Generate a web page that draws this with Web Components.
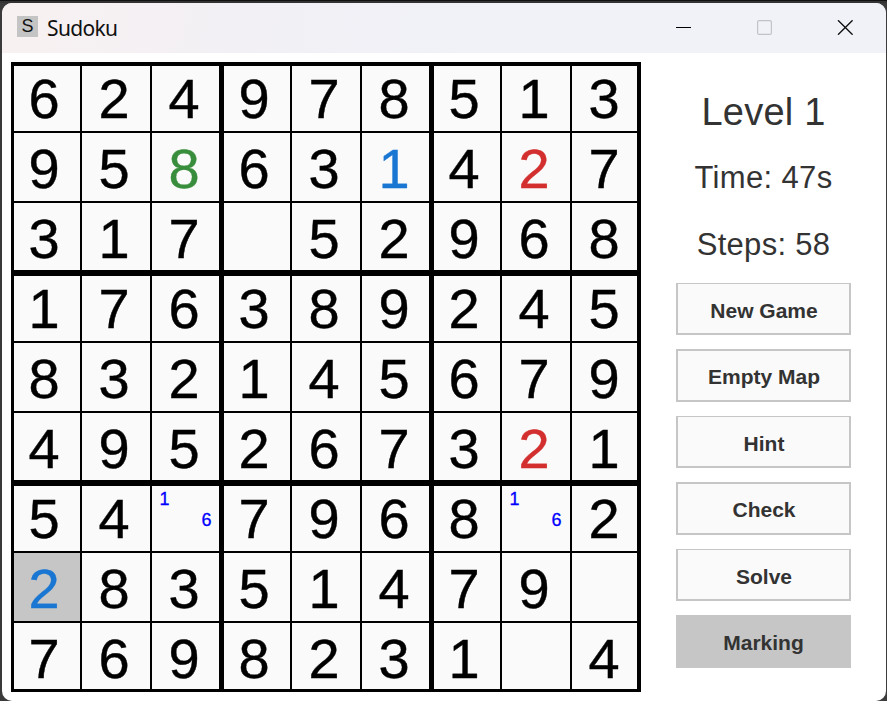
<!DOCTYPE html>
<html lang="en">
<head>
<meta charset="utf-8">
<title>Sudoku</title>
<style>
html,body{margin:0;height:100%;overflow:hidden}
body{font-family:"Liberation Sans",sans-serif;background:linear-gradient(90deg,#3a3a3a 0 25%,#474747 60%,#3c3c3c)}
</style>
</head>
<body>
<app-window>
  <title-bar slot="title">Sudoku</title-bar>
  <sudoku-board selected="63"></sudoku-board>
  <side-panel>
    <stat-line size="38" style="--h:44px;--top:36px;--ls:.2px">Level 1</stat-line>
    <stat-line size="31" style="--h:36px;--top:34px;--ls:.35px">Time: 47s</stat-line>
    <stat-line size="31" style="--h:36px;--top:39px;--ls:.3px">Steps: 58</stat-line>
    <menu-button slot="actions">New Game</menu-button>
    <menu-button slot="actions" tall>Empty Map</menu-button>
    <menu-button slot="actions">Hint</menu-button>
    <menu-button slot="actions" tall>Check</menu-button>
    <menu-button slot="actions">Solve</menu-button>
    <menu-button slot="actions" tall active>Marking</menu-button>
  </side-panel>
</app-window>
<script>
const define = (name, html, setup) => customElements.define(name, class extends HTMLElement {
  connectedCallback() {
    if (this.shadowRoot) return;
    this.attachShadow({mode: 'open'}).innerHTML = html;
    if (setup) setup(this, this.shadowRoot);
  }
});

define('app-window', `<style>
:host{display:block;box-sizing:border-box;width:887px;height:701px;padding:3px 1px 0 2px;background:linear-gradient(#111 0 1px,#333 1px 3px,transparent 3px)}
.frame{height:698px;background:#fff;border-radius:10px;overflow:hidden}
.body{display:flex;padding:9px 0 0 9px}
</style><div class="frame"><slot name="title"></slot><div class="body"><slot></slot></div></div>`);

define('title-bar', `<style>
:host{display:flex;align-items:center;height:50px;background:linear-gradient(100deg,#f8f1f1,#f2f0f5 28%,#f0f2f8 55%);color:#111}
.icon{width:21px;height:21px;margin:-3px 9px 0 15px;background:#c4c4c4;font:18px/21px "Liberation Sans",sans-serif;text-align:center}
.name{flex:1;font:21px/28px "Noto Sans","Open Sans",sans-serif;letter-spacing:-.65px}
svg{width:178px;height:15px;margin:-1px 32px 0 0}
</style><span class="icon">S</span><span class="name"><slot></slot></span>
<svg viewBox="0 0 178 15" fill="none"><path d="M0 7.5h15" stroke="#000"/><rect x="81.6" y=".6" width="13.8" height="13.8" rx="1.5" stroke="#c2c3c7" stroke-width="1.2"/><path d="M162 .3l14.6 14.4M176.6.3L162 14.7" stroke="#111" stroke-width="1.4"/></svg>`);

define('sudoku-cell', `<style>
:host{display:grid;width:70px;height:70px;background:#000;color:#000}
.face,.value,.marks{grid-area:1/1}
.face{margin:var(--t) var(--r) var(--b) var(--l);background:#fafafa}
:host([selected]) .face{background:#c6c6c6}
.value{font-size:56px;line-height:70px;text-align:center;padding:2px 4px 0 0;height:68px;-webkit-text-stroke:.4px currentColor}
:host([kind=hint]){color:#388e3c}
:host([kind=user]){color:#1976d2}
:host([kind=wrong]){color:#d32f2f}
.marks{display:grid;grid-template:repeat(3,21px)/repeat(3,21px);place-items:center;padding:7px 0 0 3px;height:63px;font-size:18px;line-height:21px;color:#00f;-webkit-text-stroke:.3px currentColor}
</style><div class="face"></div>`, (el, root) => {
  const box = document.createElement('div');
  if (el.getAttribute('marks')) {
    box.className = 'marks';
    for (let n = 1; n <= 9; n++) {
      const s = document.createElement('span');
      if (el.getAttribute('marks').includes(n)) s.textContent = n;
      box.append(s);
    }
  } else {
    box.className = 'value';
    box.textContent = el.getAttribute('value') || '';
  }
  root.append(box);
});

define('sudoku-board', `<style>
:host{display:grid;grid-template-columns:repeat(9,70px);grid-auto-rows:70px;width:630px;height:630px;flex:none}
</style>`, (el, root) => {
  // . = empty cell, m = cell with pencil marks
  const rows = ['624978513', '958631427', '317.52968', '176389245', '832145679', '495267321', '54m7968m2', '28351479.', '7698231.4'];
  const kinds = {11: 'hint', 14: 'user', 16: 'wrong', 52: 'wrong', 63: 'user'};
  rows.join('').split('').forEach((ch, i) => {
    const c = document.createElement('sudoku-cell'), x = i % 9, y = Math.floor(i / 9);
    if (ch === 'm') c.setAttribute('marks', '16');
    else if (ch !== '.') c.setAttribute('value', ch);
    if (kinds[i]) c.setAttribute('kind', kinds[i]);
    if (i === +el.getAttribute('selected')) c.setAttribute('selected', '');
    const px = {l: x % 3 ? 1 : 3, r: x === 8 ? 4 : x % 3 === 2 ? 2 : 1, t: y % 3 ? 1 : 4, b: y === 8 ? 3 : y % 3 === 2 ? 2 : 1};
    for (const k in px) c.style.setProperty('--' + k, px[k] + 'px');
    root.append(c);
  });
});

define('side-panel', `<style>
:host{display:block;width:175px;margin-left:35px}
.actions{display:flex;flex-direction:column;gap:14px;padding-top:20px}
</style><slot></slot><div class="actions"><slot name="actions"></slot></div>`);

define('stat-line', `<style>
:host{display:block;height:var(--h);line-height:var(--h);padding-top:var(--top);margin-top:-8px;text-align:center;color:#333;letter-spacing:var(--ls);white-space:nowrap}
</style><slot></slot>`, el => { el.style.fontSize = el.getAttribute('size') + 'px'; });

define('menu-button', `<style>
:host{display:block;box-sizing:border-box;height:52px;border:2px solid #c6c6c6;border-top-width:1px;background:#fafafa;color:#333;font-weight:bold;font-size:21px;line-height:52px;padding:1px 0 0 1px;text-align:center}
:host([tall]){height:53px;border-top-width:2px;padding-top:0}
:host([active]){background:#c6c6c6;padding-left:0}
</style><slot></slot>`);
</script>
</body>
</html>
